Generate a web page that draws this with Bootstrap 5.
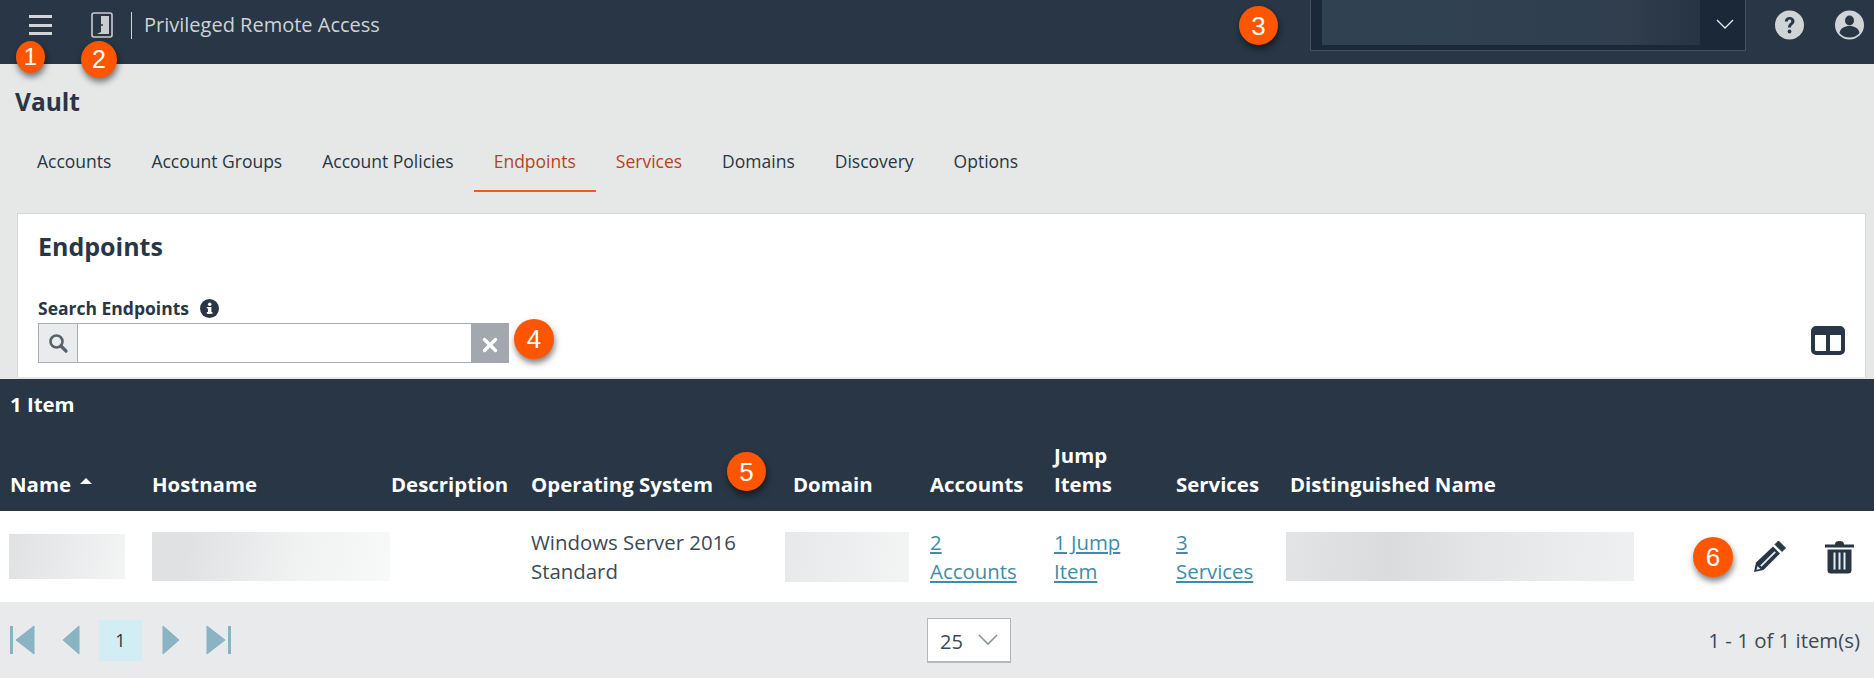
<!DOCTYPE html>
<html lang="en">
<head>
<meta charset="utf-8">
<title>Vault Endpoints</title>
<link href="https://cdn.jsdelivr.net/npm/bootstrap@5.3.0/dist/css/bootstrap.min.css" rel="stylesheet">
<style>
html,body{height:678px;overflow:hidden}
body{font-family:"Open Sans",sans-serif;background:#e6e8e7;color:#283645;position:relative;font-size:17px}
.topbar{height:64px;background:#283645;color:#cfd3d6;padding:0 0 14px}
.hamb{margin-left:29px;width:23px}
.hamb span{display:block;height:3px;background:#d2d5d7;margin-bottom:5.5px}
.hamb span:last-child{margin-bottom:0}
.door{margin-left:39px;width:22px;height:26px}
.vdiv{width:1px;height:27px;background:#cfd3d6;margin-left:18px}
.apptitle{margin-left:12px;font-size:20px;line-height:24px;color:#cfd3d6}
.sitebox{margin-left:auto;align-self:flex-start;width:436px;height:51px;background:#1a2838;border:1px solid #41515f;border-top:0;display:flex;position:relative}
.siteblur{margin-left:11px;width:378px;height:45px;background:linear-gradient(90deg,#304252,#303e4e 80%,#273444)}
.sitechev{position:absolute;left:405px;top:19px}
.helpi{margin-left:29px}
.useri{margin-left:31px;margin-right:10px}
.vaulth{font-size:24.5px;font-weight:700;margin:0;padding:22px 0 0 15px;line-height:32px}
.tabsbar{margin:16px 0 21px;padding-left:17px;height:58px}
.tabsbar .nav-link{padding:0 20px;height:58px;line-height:54px;color:#283645;font-size:17.5px}
.tabsbar .nav-link.on{color:#b5441a;border-bottom:2px solid #f05a22}
.tabsbar .nav-link.hov{color:#b5441a}
.panelbox{margin:0 8px 0 17px;height:164px;background:#fff;border:1px solid #d4d8d8;padding:16px 20px 0 20px;border-bottom:0}
.panelbox h2{font-size:25px;font-weight:700;margin:0;line-height:32px;color:#283645}
.srchlabel{font-size:17.5px;font-weight:700;line-height:22px;margin:35px 0 4px;display:flex;align-items:center;gap:11px}
.srchrow{display:flex;justify-content:space-between;align-items:flex-start}
.srchgroup{width:471px;height:40px}
.srchgroup .input-group-text{width:40px;padding:0;justify-content:center;background:#e9ebed;border:1px solid #a9aeb3;border-radius:0}
.srchgroup .form-control{border:1px solid #a9aeb3;border-right:0;border-radius:0;height:40px}
.srchgroup .clearb{width:38px;padding:0;background:#a2a8ae;border:0;border-radius:0;color:#fff}
.colsi{margin:3px 0 0 0}
.band{margin-top:2px;background:#283645;color:#fff}
.countline{height:45px;padding:10px 0 0 10px;font-weight:700;font-size:20.4px;line-height:30px;background:#283645}
.dtable{table-layout:fixed;width:1874px;margin:0;--bs-table-bg:transparent;border-collapse:collapse}
.dtable thead th{background:#283645;color:#fff;font-size:20.4px;font-weight:700;line-height:29px;vertical-align:bottom;padding:0 0 12px 10px;border:0;height:87px;box-shadow:none;white-space:nowrap}
.dtable tbody tr{background:#fff}
.dtable tbody td{background:transparent;color:#3c4956;font-size:20.4px;line-height:29px;height:91px;vertical-align:middle;padding:0 0 0 10px;border:0;box-shadow:none}
.dtable a{color:#3f8ca8;text-decoration:underline}
.c1{width:142px}.c2{width:239px}.c3{width:140px}.c4{width:262px}.c5{width:137px}.c6{width:124px}.c7{width:122px}.c8{width:114px}.c9{width:410px}.c10{width:184px}
.sortup{display:inline-block;width:0;height:0;border-left:6px solid transparent;border-right:6px solid transparent;border-bottom:6px solid #fff;margin-left:9px;vertical-align:8px}
.dtable tbody td.pa{padding-left:9px}
.dtable tbody td.pb{padding-left:2px}
.dtable tbody td.pc{padding-left:6px}
.smear{display:block}
.s1{width:116px;height:45px;background:linear-gradient(100deg,#e0e1e3,#f3f4f4)}
.s2{width:238px;height:49px;background:linear-gradient(100deg,#e0e1e3 15%,#f0f1f1 60%,#f8f9f9)}
.s3{width:124px;height:50px;background:linear-gradient(100deg,#e7e8ea,#f3f4f4)}
.s4{width:348px;height:49px;background:linear-gradient(95deg,#e3e4e6,#d9dbdd 30%,#e4e5e6 55%,#eff0f1)}
.acts{display:flex;align-items:center;justify-content:flex-end;gap:38px;padding-right:20px}
.pagerfoot{height:76px;background:#e9eaec;display:flex;align-items:center;padding:0 14px 0 10px}
.pgwrap{width:917px;display:flex;align-items:center}
.pgprev{margin-left:27px}
.pglast{margin-left:26px}
.pgcur{width:43px;height:41px;background:#d3edf5;color:#283645;display:flex;align-items:center;justify-content:center;font-size:18px;margin:0 20px 0 19px}
.sizesel{width:84px;height:45px;border:1px solid #b4b8bc;border-bottom-width:2px;border-radius:0;padding:4px 0 0 12px;font-size:20px;color:#3c4956;background-position:right 12px center;background-size:20px 12px;background-image:url("data:image/svg+xml,%3Csvg xmlns='http://www.w3.org/2000/svg' viewBox='0 0 20 12'%3E%3Cpath d='M1 1l9 9 9-9' fill='none' stroke='%238c949b' stroke-width='1.6'/%3E%3C/svg%3E")}
.pginfo{margin-left:auto;font-size:20.4px;color:#3c4956}
.mk{position:absolute;background:#fe5500;color:#fff;border-radius:50%;font-family:"Liberation Sans",Arial,sans-serif;display:flex;align-items:center;justify-content:center;box-shadow:1px 4px 6px rgba(0,0,0,.5);width:39px;height:39px;font-size:26px;line-height:1}
.m1{left:16px;top:41px;width:29px;height:32px;font-size:24px}
.m2{left:81px;top:41px;width:36px;height:37px;font-size:25px}
.m3{left:1239px;top:6px}
.m4{left:514px;top:319px;width:40px;height:40px}
.m5{left:727px;top:452px}
.m6{left:1693px;top:537px;width:40px;height:40px}
</style>
</head>
<body>
<nav class="navbar topbar flex-nowrap justify-content-start align-items-center">
  <div class="hamb"><span></span><span></span><span></span></div>
  <svg class="door" viewBox="0 0 22 26"><rect x="1" y="1" width="20" height="24" rx="2" fill="none" stroke="#c9cdd0" stroke-width="1.600"/><path d="M10 4h8v18H6l4-2z" fill="#c9cdd0"/><circle cx="11" cy="13" r="1" fill="#283645"/></svg>
  <div class="vdiv"></div>
  <div class="apptitle">Privileged Remote Access</div>
  <div class="sitebox"><div class="siteblur"></div>
    <svg class="sitechev" width="18" height="11" viewBox="0 0 18 11"><path d="M1 1l8 8 8-8" fill="none" stroke="#e8eaec" stroke-width="1.3"/></svg>
  </div>
  <svg class="helpi" width="29" height="30" viewBox="0 0 29 30"><circle cx="14.5" cy="15" r="14.5" fill="#d0d4d6"/><path d="M9.8 11.5c0-3 2.2-4.6 4.9-4.6s4.800 1.700 4.800 4.200c0 3.600-3.500 3.600-3.500 6.500h-3c0-4.300 3.300-4.300 3.300-6.400 0-1-.8-1.700-1.700-1.700-1.100 0-1.800.8-1.800 2z" fill="#283645"/><circle cx="14.500" cy="21.500" r="1.900" fill="#283645"/></svg>
  <svg class="useri" width="29" height="30" viewBox="0 0 29 30"><circle cx="14.500" cy="15" r="14.500" fill="#d0d4d6"/><ellipse cx="14.500" cy="10.500" rx="4.500" ry="5" fill="#283645"/><path d="M4.500 23c1-5 5-7 10-7s9 2 10 7c-2.500 3-6 4.500-10 4.500S7 26 4.500 23z" fill="#283645"/></svg>
</nav>

<h1 class="vaulth">Vault</h1>
<ul class="nav tabsbar">
  <li class="nav-item"><a class="nav-link" href="#">Accounts</a></li>
  <li class="nav-item"><a class="nav-link" href="#">Account Groups</a></li>
  <li class="nav-item"><a class="nav-link" href="#">Account Policies</a></li>
  <li class="nav-item"><a class="nav-link on" href="#">Endpoints</a></li>
  <li class="nav-item"><a class="nav-link hov" href="#">Services</a></li>
  <li class="nav-item"><a class="nav-link" href="#">Domains</a></li>
  <li class="nav-item"><a class="nav-link" href="#">Discovery</a></li>
  <li class="nav-item"><a class="nav-link" href="#">Options</a></li>
</ul>

<section class="panelbox">
  <h2>Endpoints</h2>
  <div class="srchlabel">Search Endpoints
    <svg width="19" height="19" viewBox="0 0 19 19"><circle cx="9.500" cy="9.500" r="9.500" fill="#283645"/><rect x="8" y="8" width="3.400" height="6.500" fill="#fff"/><rect x="6.800" y="13" width="5.600" height="1.800" fill="#fff"/><rect x="6.800" y="8" width="2" height="1.500" fill="#fff"/><circle cx="9.700" cy="5.300" r="1.800" fill="#fff"/></svg>
  </div>
  <div class="srchrow">
    <div class="input-group srchgroup flex-nowrap">
      <span class="input-group-text"><svg width="20" height="20" viewBox="0 0 20 20"><circle cx="8.500" cy="8.500" r="6" fill="none" stroke="#56626e" stroke-width="2.600"/><path d="M13 13l5 5" stroke="#56626e" stroke-width="3.200" stroke-linecap="round"/></svg></span>
      <input type="text" class="form-control" aria-label="Search Endpoints">
      <button type="button" class="btn clearb" aria-label="Clear"><svg width="16" height="16" viewBox="0 0 16 16"><path d="M2.500 2.500l11 11M13.500 2.500l-11 11" stroke="#fff" stroke-width="3.400" stroke-linecap="round"/></svg></button>
    </div>
    <svg class="colsi" width="34" height="29" viewBox="0 0 34 29"><rect x="2" y="2" width="30" height="25" rx="3" fill="#fff" stroke="#283645" stroke-width="4"/><rect x="2" y="2" width="30" height="7" fill="#283645"/><rect x="15" y="4" width="4" height="23" fill="#283645"/></svg>
  </div>
</section>

<div class="band">
  <div class="countline">1 Item</div>
  <table class="table dtable">
    <colgroup><col class="c1"><col class="c2"><col class="c3"><col class="c4"><col class="c5"><col class="c6"><col class="c7"><col class="c8"><col class="c9"><col class="c10"></colgroup>
    <thead>
      <tr><th>Name<span class="sortup"></span></th><th>Hostname</th><th>Description</th><th>Operating System</th><th>Domain</th><th>Accounts</th><th>Jump<br>Items</th><th>Services</th><th>Distinguished Name</th><th></th></tr>
    </thead>
    <tbody>
      <tr>
        <td class="pa"><span class="smear s1"></span></td>
        <td><span class="smear s2"></span></td>
        <td></td>
        <td>Windows Server 2016<br>Standard</td>
        <td class="pb"><span class="smear s3"></span></td>
        <td><a href="#">2<br>Accounts</a></td>
        <td><a href="#">1 Jump<br>Item</a></td>
        <td><a href="#">3<br>Services</a></td>
        <td class="pc"><span class="smear s4"></span></td>
        <td>
          <div class="acts">
            <svg width="34" height="33" viewBox="0 0 34 33"><path d="M25.500 1l7 7-3.500 3.500-7-7z" fill="#283645" stroke="#283645" stroke-linejoin="round"/><path d="M20 6.500l7 7L10.500 30 1 32l2-9.500z" fill="#283645"/><path d="M21.500 11.200l1.300 1.300L8.500 26.800l-1.300-1.300z" fill="#e6eef2"/><path d="M4.500 26l3 3-4 .8z" fill="#e6eef2"/></svg>
            <svg width="29" height="34" viewBox="0 0 29 34"><path d="M0 4.500h29v3H0zM10 4.500c0-2.500 1.500-3.500 4.500-3.500s4.500 1 4.500 3.500z" fill="#283645"/><path d="M2.500 9.500h24V30a3.500 3.500 0 0 1-3.500 3.500H6A3.500 3.500 0 0 1 2.500 30z" fill="#283645"/><path d="M8.500 12.500h2v17h-2zM13.500 12.500h2v17h-2zM18.500 12.500h2v17h-2z" fill="#e6eef2"/></svg>
          </div>
        </td>
      </tr>
    </tbody>
  </table>
</div>

<footer class="pagerfoot">
  <div class="pgwrap">
    <svg width="25" height="30" viewBox="0 0 25 30"><rect x="0" y="1" width="3" height="28" fill="#8ab3c4"/><path d="M6 15L24 1v28z" fill="#8ab3c4" stroke="#8ab3c4" stroke-linejoin="round"/></svg>
    <svg class="pgprev" width="18" height="30" viewBox="0 0 18 30"><path d="M1 15L17 1v28z" fill="#8ab3c4" stroke="#8ab3c4" stroke-linejoin="round"/></svg>
    <div class="pgcur">1</div>
    <svg width="18" height="30" viewBox="0 0 18 30"><path d="M17 15L1 1v28z" fill="#8ab3c4" stroke="#8ab3c4" stroke-linejoin="round"/></svg>
    <svg class="pglast" width="25" height="30" viewBox="0 0 25 30"><path d="M19 15L1 1v28z" fill="#8ab3c4" stroke="#8ab3c4" stroke-linejoin="round"/><rect x="22" y="1" width="3" height="28" fill="#8ab3c4"/></svg>
  </div>
  <select class="form-select sizesel" aria-label="Page size"><option>25</option></select>
  <div class="pginfo">1 - 1 of 1 item(s)</div>
</footer>

<div class="mk m1">1</div>
<div class="mk m2">2</div>
<div class="mk m3">3</div>
<div class="mk m4">4</div>
<div class="mk m5">5</div>
<div class="mk m6">6</div>
<script src="https://cdn.jsdelivr.net/npm/bootstrap@5.3.0/dist/js/bootstrap.bundle.min.js"></script>
</body>
</html>
